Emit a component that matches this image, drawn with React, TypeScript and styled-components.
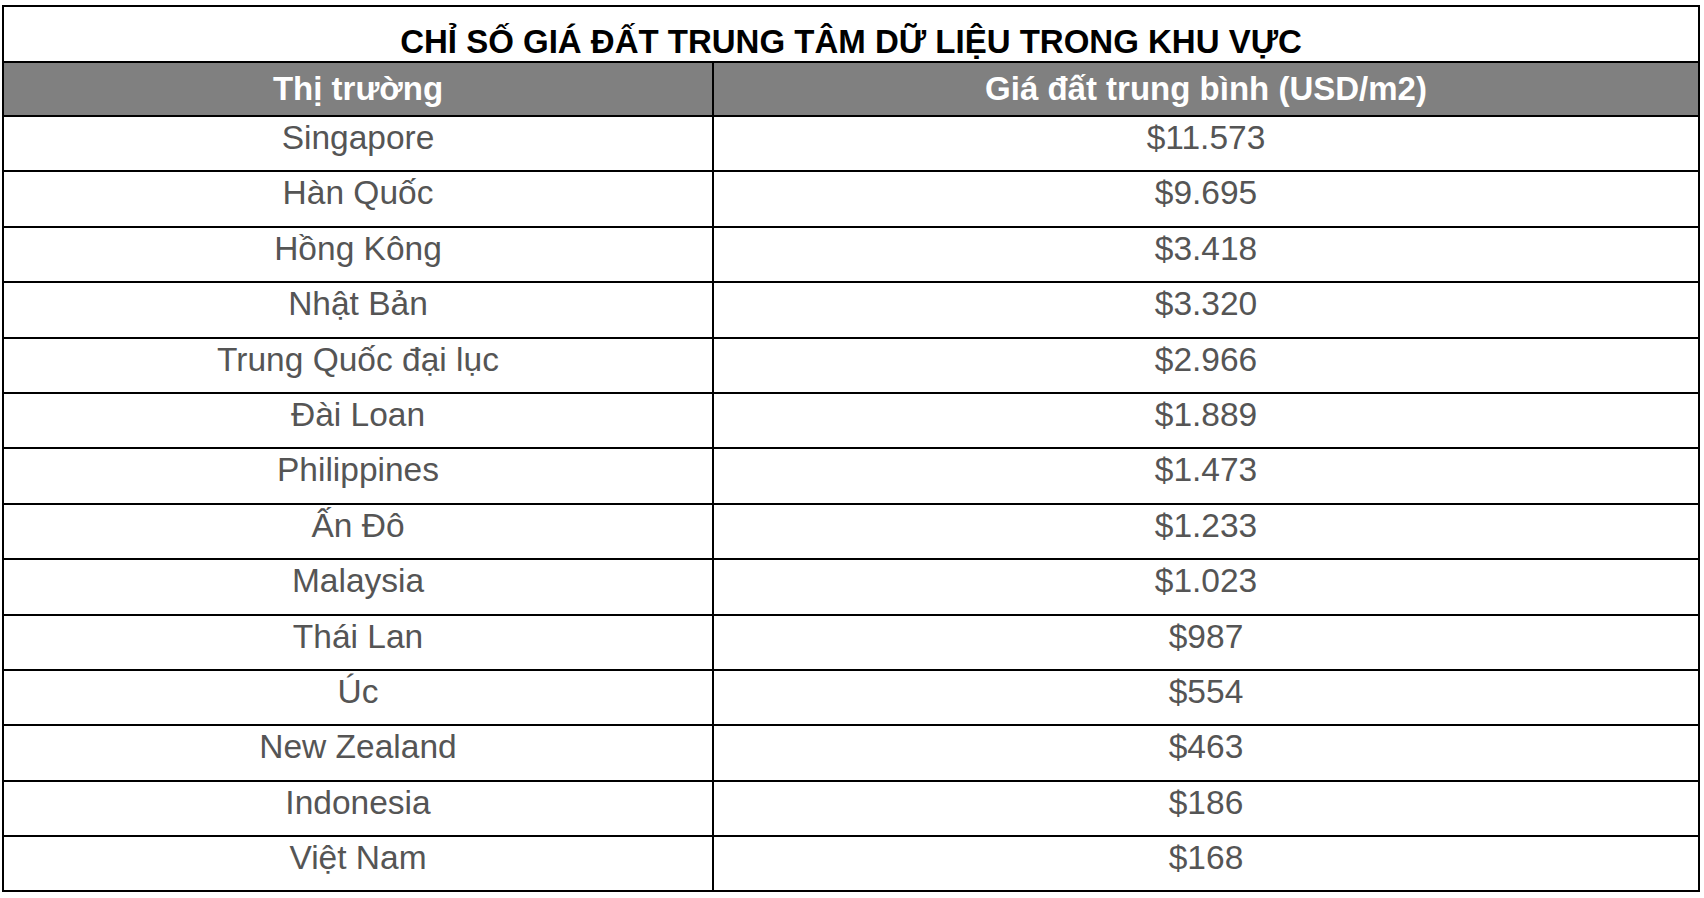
import React from "react";
import styled, { createGlobalStyle } from "styled-components";

const GlobalStyle = createGlobalStyle`
  html, body {
    margin: 0;
    padding: 0;
    background: #ffffff;
  }
  body {
    font-family: "Liberation Sans", Arial, sans-serif;
  }
`;

const Page = styled.div`
  padding: 5px 0 0 2px;
  width: 1704px;
  box-sizing: border-box;
`;

const Table = styled.div`
  width: 1698px;
  border: 2px solid #000;
  box-sizing: border-box;
  display: flex;
  flex-direction: column;
`;

const TitleRow = styled.div`
  display: flex;
  align-items: flex-end;
  justify-content: center;
  padding-bottom: 1px;
  box-sizing: border-box;
  border-bottom: 2px solid #000;
  height: 56px;
  font-weight: 700;
  font-size: 33px;
  line-height: 1.1;
  color: #000;
  white-space: nowrap;
`;

const Row = styled.div<{ $head?: boolean }>`
  display: grid;
  grid-template-columns: 708px 2px 1fr;
  height: ${(p) => (p.$head ? "54px" : "55.4px")};
  box-sizing: border-box;
  border-bottom: 2px solid #000;
  background: ${(p) => (p.$head ? "#808080" : "#ffffff")};
  &:last-child {
    border-bottom: none;
    height: 53.4px;
  }
`;

const Divider = styled.div`
  background: #000;
`;

const Cell = styled.div<{ $head?: boolean }>`
  display: flex;
  justify-content: center;
  align-items: ${(p) => (p.$head ? "center" : "flex-start")};
  padding-top: ${(p) => (p.$head ? "0" : "2px")};
  font-size: ${(p) => (p.$head ? "33px" : "33.5px")};
  font-weight: ${(p) => (p.$head ? 700 : 400)};
  color: ${(p) => (p.$head ? "#ffffff" : "#555555")};
  white-space: nowrap;
`;

const data: [string, string][] = [
  ["Singapore", "$11.573"],
  ["Hàn Quốc", "$9.695"],
  ["Hồng Kông", "$3.418"],
  ["Nhật Bản", "$3.320"],
  ["Trung Quốc đại lục", "$2.966"],
  ["Đài Loan", "$1.889"],
  ["Philippines", "$1.473"],
  ["Ấn Đô", "$1.233"],
  ["Malaysia", "$1.023"],
  ["Thái Lan", "$987"],
  ["Úc", "$554"],
  ["New Zealand", "$463"],
  ["Indonesia", "$186"],
  ["Việt Nam", "$168"],
];

export default function App() {
  return (
    <>
      <GlobalStyle />
      <Page>
        <Table>
          <TitleRow>CHỈ SỐ GIÁ ĐẤT TRUNG TÂM DỮ LIỆU TRONG KHU VỰC</TitleRow>
          <Row $head>
            <Cell $head>Thị trường</Cell>
            <Divider />
            <Cell $head>Giá đất trung bình (USD/m2)</Cell>
          </Row>
          {data.map(([m, p]) => (
            <Row key={m}>
              <Cell>{m}</Cell>
              <Divider />
              <Cell>{p}</Cell>
            </Row>
          ))}
        </Table>
      </Page>
    </>
  );
}
